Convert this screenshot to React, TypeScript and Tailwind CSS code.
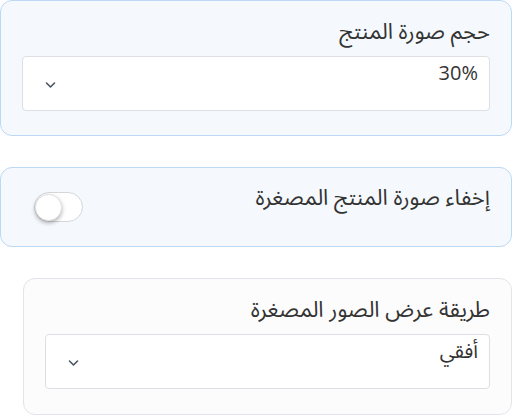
import React from 'react';

function Chevron() {
  return (
    <svg className="h-[8px] w-[11px]" viewBox="0 0 11 8" fill="none">
      <path d="M1.5 2l4 4 4-4" stroke="#4b5563" strokeWidth={1.6} strokeLinecap="round" strokeLinejoin="round" />
    </svg>
  );
}

function SelectBox({ value }: { value: string }) {
  return (
    <div className="relative h-[55px] rounded-[4px] border border-[#dcdfe3] bg-white">
      <div className="pr-[11px] pt-0 text-[20px] leading-[32px] text-[#333]">{value}</div>
      <div className="absolute left-[22px] top-[24px]">
        <Chevron />
      </div>
    </div>
  );
}

export default function App() {
  return (
    <div dir="rtl" className="w-[512px] bg-white font-['Open_Sans','Noto_Sans_Arabic',sans-serif]">
      {/* product image size */}
      <div className="h-[136px] rounded-[12px] border border-[#bcd8f5] bg-[#f5f9fd] px-[21px] pt-[13px]">
        <div className="mb-[10px] h-[32px] text-[22px] leading-[32px] text-[#333]">حجم صورة المنتج</div>
        <SelectBox value="30%" />
      </div>

      {/* hide thumbnail */}
      <div className="mt-[31px] flex h-[80px] items-start justify-between rounded-[12px] border border-[#bcd8f5] bg-[#f5f9fd] pl-[33px] pr-[21px]">
        <div className="mt-[12px] text-[22px] leading-[32px] text-[#333]">إخفاء صورة المنتج المصغرة</div>
        <div className="relative mt-[24px] h-[30px] w-[49px] rounded-full border border-[#d4d6d9] bg-white">
          <div className="absolute right-[20px] top-[1px] h-[27px] w-[27px] rounded-full border border-[#e2e2e2] bg-white shadow-[0_2px_4px_rgba(0,0,0,0.3)]" />
        </div>
      </div>

      {/* thumbnail display */}
      <div className="ml-[23px] mt-[31px] h-[137px] rounded-[12px] border border-[#e1e4e8] bg-[#fcfcfd] px-[21px] pt-[13px]">
        <div className="mb-[10px] h-[32px] text-[22px] leading-[32px] text-[#333]">طريقة عرض الصور المصغرة</div>
        <SelectBox value="أفقي" />
      </div>
    </div>
  );
}
